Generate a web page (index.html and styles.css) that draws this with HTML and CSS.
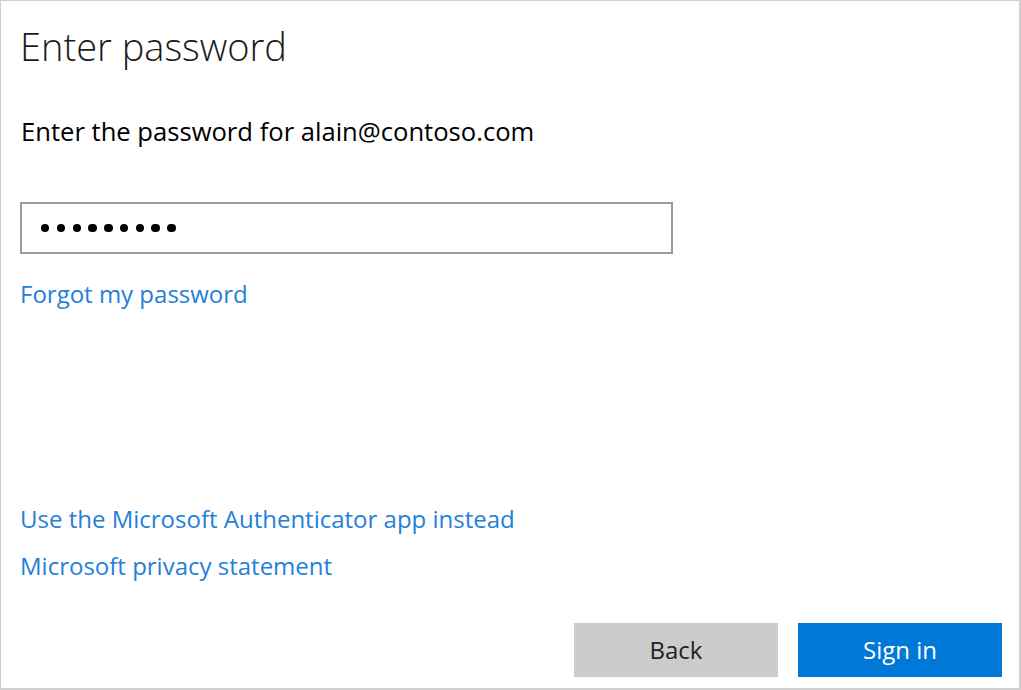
FILE: index.html
```html
<!DOCTYPE html>
<html lang="en">
<head>
<meta charset="utf-8">
<title>Enter password</title>
<link rel="stylesheet" href="styles.css">
</head>
<body>
<div class="frame">
  <main class="content">
    <h1 class="title">Enter password</h1>
    <p class="subtitle">Enter the password for alain@contoso.com</p>
    <div class="input" role="textbox" aria-label="Password">
      <span class="dot"></span><span class="dot"></span><span class="dot"></span>
      <span class="dot"></span><span class="dot"></span><span class="dot"></span>
      <span class="dot"></span><span class="dot"></span><span class="dot"></span>
    </div>
    <a class="link forgot" href="#">Forgot my password</a>
    <div class="spacer"></div>
    <a class="link alt" href="#">Use the Microsoft Authenticator app instead</a>
    <a class="link privacy" href="#">Microsoft privacy statement</a>
    <div class="buttons">
      <button class="btn back" type="button">Back</button>
      <button class="btn primary" type="button">Sign in</button>
    </div>
  </main>
</div>
</body>
</html>
```

FILE: styles.css
```css
html, body {
  margin: 0;
  padding: 0;
  background: #ffffff;
}

.frame {
  box-sizing: border-box;
  width: 1021px;
  height: 690px;
  border: 1px solid #d0d0d0;
  border-right-width: 2px;
  border-bottom-width: 2px;
  background: #ffffff;
  font-family: "Open Sans", "Noto Sans", "Liberation Sans", sans-serif;
}

.content {
  display: flex;
  flex-direction: column;
  align-items: flex-start;
  height: 100%;
  box-sizing: border-box;
  padding: 21px 17px 11px 19px;
}

.title {
  margin: 0 0 0 0;
  font-size: 38px;
  font-weight: 300;
  line-height: 48px;
  color: #1b1b1b;
}

.subtitle {
  margin: 48px 0 0 1px;
  font-size: 25.6px;
  line-height: 28px;
  color: #000000;
}

.input {
  box-sizing: border-box;
  margin-top: 56px;
  width: 653px;
  height: 52px;
  border: 2px solid #9a9a9a;
  display: flex;
  align-items: center;
  gap: 7.4px;
  padding-left: 19px;
}

.dot {
  width: 8.4px;
  height: 8.4px;
  border-radius: 50%;
  background: #000000;
}

.link {
  font-size: 24px;
  line-height: 28px;
  color: #2480d8;
  text-decoration: none;
  margin-left: 0;
}

.forgot {
  margin-top: 26px;
}

.spacer {
  flex: 1;
}

.privacy {
  margin-top: 19px;
}

.buttons {
  display: flex;
  gap: 20px;
  align-self: flex-end;
  margin-top: 43px;
}

.btn {
  width: 204px;
  height: 54px;
  border: none;
  font-family: inherit;
  font-size: 24px;
  padding: 0 0 1px;
}

.back {
  background: #cccccc;
  color: #222222;
}

.primary {
  background: #0078d7;
  color: #ffffff;
}
```
